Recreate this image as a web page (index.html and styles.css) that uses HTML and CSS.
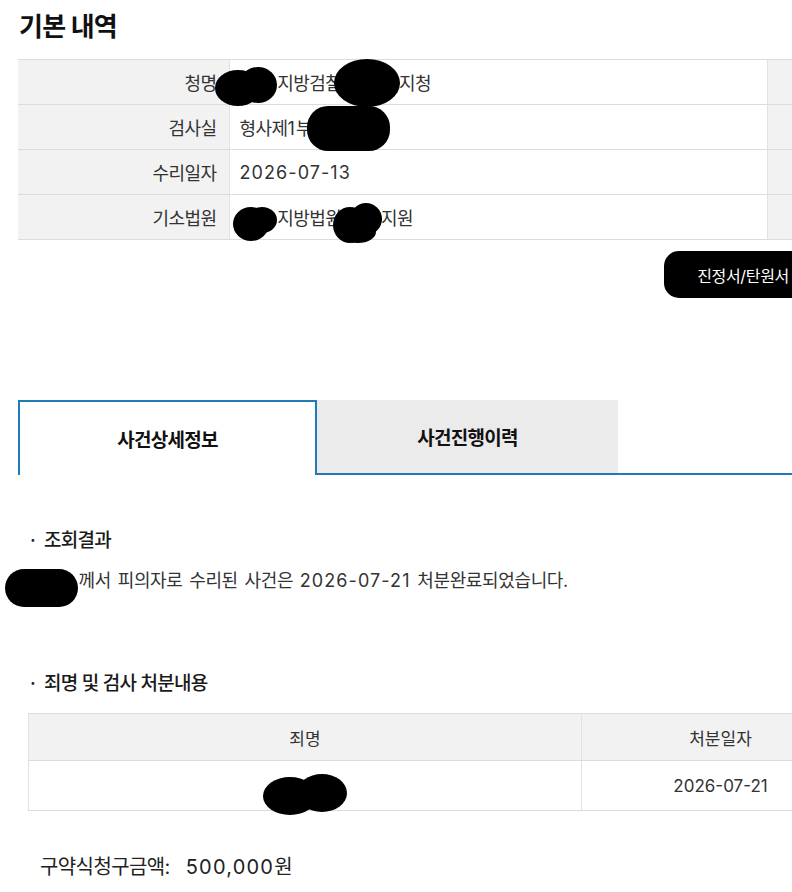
FILE: index.html
```html
<!DOCTYPE html>
<html lang="ko">
<head>
<meta charset="utf-8">
<title>기본 내역</title>
<link rel="stylesheet" href="styles.css">
</head>
<body>
<div class="page">
  <h1 class="title">기본 내역</h1>

  <table class="basic">
    <colgroup><col class="c-label"><col class="c-value"><col></colgroup>
    <tr><th>청명</th><td><span class="mask w21"></span>지방검찰<span class="mask w32"></span>지청</td><th></th></tr>
    <tr><th>검사실</th><td>형사제<span class="num">1</span>부<span class="mask w40"></span></td><th></th></tr>
    <tr><th>수리일자</th><td><span class="num">2026-07-13</span></td><th></th></tr>
    <tr><th>기소법원</th><td><span class="mask w21"></span>지방법원<span class="mask w22"></span>지원</td><th></th></tr>
  </table>

  <div class="actions">
    <button class="btn" type="button">진정서/탄원서</button>
  </div>

  <div class="tabs">
    <div class="tab active">사건상세정보</div>
    <div class="tab">사건진행이력</div>
  </div>

  <section class="section">
    <h3 class="bullet">조회결과</h3>
    <p class="sentence"><span class="mask w27"></span>께서 피의자로 수리된 사건은 <span class="num">2026-07-21</span> 처분완료되었습니다.</p>

    <h3 class="bullet second">죄명 및 검사 처분내용</h3>
    <table class="disp">
      <colgroup><col class="c-crime"><col class="c-date"><col></colgroup>
      <tr><th>죄명</th><th>처분일자</th><th></th></tr>
      <tr><td><span class="mask w47"></span></td><td><span class="num">2026-07-21</span></td><td></td></tr>
    </table>

    <p class="amount"><span class="amount-label">구약식청구금액:</span><span class="amount-value"><span class="num">500,000</span>원</span></p>
  </section>

  <svg class="redactions" width="792" height="892" viewBox="0 0 792 892" aria-hidden="true">
    <g fill="#000">
      <ellipse cx="238" cy="79" rx="23" ry="18"/>
      <ellipse cx="258" cy="76" rx="19" ry="18"/>
      <ellipse cx="367" cy="74" rx="33" ry="24"/>
      <rect x="307" y="97" width="83" height="45" rx="21"/>
      <ellipse cx="251" cy="215" rx="18" ry="17"/>
      <ellipse cx="262" cy="211" rx="15" ry="13"/>
      <ellipse cx="350" cy="216" rx="17" ry="18"/>
      <ellipse cx="366" cy="210" rx="16" ry="16"/>
      <ellipse cx="358" cy="223" rx="18" ry="11"/>
      <rect x="5" y="560" width="73" height="38" rx="19"/>
      <ellipse cx="290" cy="787" rx="27" ry="19"/>
      <ellipse cx="322" cy="784" rx="25" ry="19"/>
    </g>
  </svg>
</div>
</body>
</html>
```

FILE: styles.css
```css
* { box-sizing: border-box; }

html { overflow: hidden; }

body {
  margin: 0;
  background: #fff;
  color: #333;
  font-family: Inter, "Noto Sans CJK KR", sans-serif;
}

.page {
  position: relative;
  width: 822px;
  padding-left: 18px;
}

.num { letter-spacing: 0.06em; }

.mask { display: inline-block; vertical-align: middle; }
.w21 { width: 2.1em; }
.w22 { width: 2.2em; }
.w27 { width: 2.7em; }
.w32 { width: 3.2em; }
.w40 { width: 4em; }
.w47 { width: 4.7em; height: 1px; }

.title {
  margin: 9px 0 14px 1px;
  font-size: 26px;
  line-height: 36px;
  font-weight: 700;
  color: #111;
  letter-spacing: -0.03em;
}

/* basic info table */
.basic {
  width: 804px;
  border-collapse: collapse;
  table-layout: fixed;
  border-top: 1px solid #dcdcdc;
  font-size: 18px;
  letter-spacing: -0.03em;
  color: #333;
}
.basic .c-label { width: 211px; }
.basic .c-value { width: 538px; }
.basic th,
.basic td {
  height: 45px;
  padding: 0;
  border-bottom: 1px solid #dcdcdc;
  white-space: nowrap;
}
.basic th {
  background: #f2f2f2;
  font-weight: 400;
  text-align: right;
  padding-right: 12px;
}
.basic td {
  padding-left: 10px;
  border-left: 1px solid #e2e2e2;
  border-right: 1px solid #e2e2e2;
}

.actions {
  display: flex;
  justify-content: flex-end;
  margin-top: 11px;
}
.btn {
  display: flex;
  align-items: center;
  height: 47px;
  padding: 0 33px;
  border: 0;
  border-radius: 15px;
  background: #000;
  color: #fff;
  font-family: inherit;
  font-size: 16px;
  letter-spacing: -0.02em;
}

/* tabs */
.tabs {
  display: flex;
  height: 75px;
  margin-top: 102px;
  border-bottom: 2px solid #1f7ab8;
}
.tab {
  display: flex;
  align-items: center;
  justify-content: center;
  width: 301px;
  height: 73px;
  background: #ebebeb;
  color: #111;
  font-size: 19px;
  font-weight: 700;
  letter-spacing: -0.04em;
}
.tab.active {
  width: 299px;
  height: 75px;
  background: #fff;
  border: 2px solid #1f7ab8;
  border-bottom: 0;
}

/* detail section */
.section { padding-left: 10px; }

.bullet {
  margin: 52px 0 0;
  font-size: 19px;
  line-height: 28px;
  font-weight: 500;
  color: #1a1a1a;
  letter-spacing: -0.04em;
}
.bullet::before {
  content: "·";
  display: inline-block;
  width: 14px;
  padding-left: 2px;
  letter-spacing: 0;
}
.bullet.second { margin-top: 75px; }

.sentence {
  margin: 12px 0 0;
  padding-left: 2px;
  font-size: 18px;
  line-height: 28px;
  letter-spacing: -0.02em;
  word-spacing: 2px;
  color: #333;
  white-space: nowrap;
}

.disp {
  width: 900px;
  margin-top: 15px;
  border-collapse: collapse;
  table-layout: fixed;
  border-top: 1px solid #dcdcdc;
  font-size: 17px;
  color: #333;
}
.disp .c-crime { width: 553px; }
.disp .c-date { width: 278px; }
.disp .num { letter-spacing: 0; }
.disp th,
.disp td {
  padding: 0;
  text-align: center;
  border-bottom: 1px solid #dcdcdc;
  border-right: 1px solid #e2e2e2;
  border-left: 1px solid #e2e2e2;
}
.disp th {
  height: 47px;
  background: #f2f2f2;
  font-weight: 400;
}
.disp td { height: 50px; }

.amount {
  margin: 41px 0 0;
  padding-left: 12px;
  font-size: 20px;
  line-height: 30px;
  color: #222;
  letter-spacing: -0.03em;
  white-space: nowrap;
}
.amount-value { margin-left: 16px; }

.redactions {
  position: absolute;
  top: 0;
  left: 0;
  pointer-events: none;
}
```
